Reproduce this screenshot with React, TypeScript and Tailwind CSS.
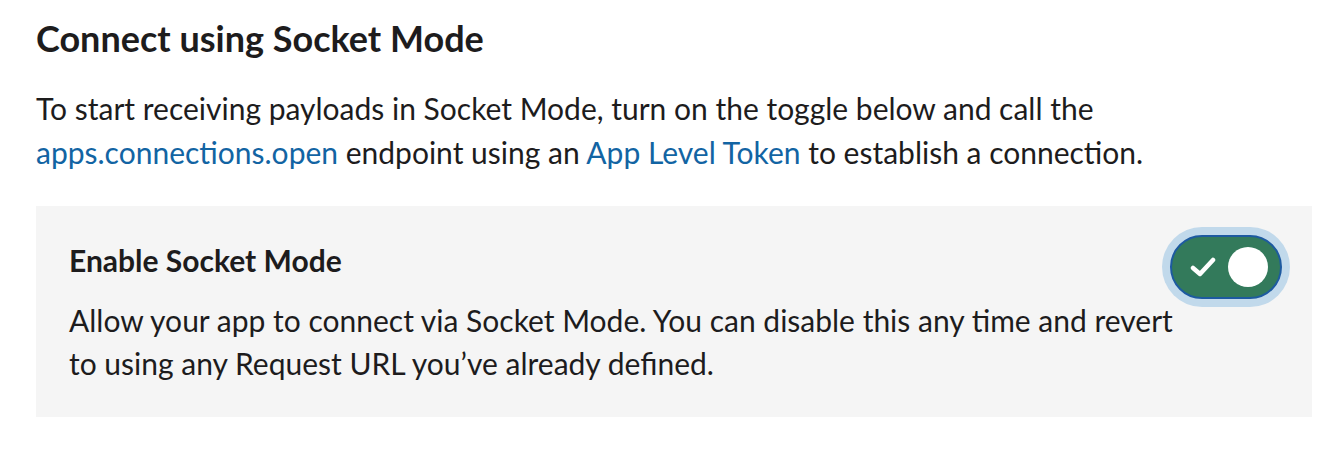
import React from "react";

const Toggle: React.FC = () => {
  return (
    <div className="rounded-full bg-[#c1d9eb] p-[8px]">
      <div className="flex h-[64px] w-[112px] items-center justify-between rounded-full border-2 border-[#1d5aa0] bg-[#337a5b] pl-[18px] pr-[12px]">
        <svg width="26" height="22" viewBox="0 0 26 22" fill="none">
          <path d="M3 12 L10 18 L23 4" stroke="#ffffff" strokeWidth="4.5" strokeLinecap="round" strokeLinejoin="round" />
        </svg>
        <div className="h-[40px] w-[40px] rounded-full bg-white" />
      </div>
    </div>
  );
};

export default function App() {
  return (
    <div className="min-h-[454px] bg-white px-[36px] pt-[16px] text-[#1d1c1d] font-['Lato','Liberation_Sans',sans-serif]">
      <h2 className="text-[36px] font-bold leading-[44px]">Connect using Socket Mode</h2>
      <p className="mt-[26px] text-[30px] leading-[44px]">
        To start receiving payloads in Socket Mode, turn on the toggle below and call the{" "}
        <a className="text-[#1264a3]">apps.connections.open</a> endpoint using an{" "}
        <a className="text-[#1264a3]">App Level Token</a> to establish a connection.
      </p>
      <div className="relative mt-[32px] w-[1276px] bg-[#f5f5f5] pb-[32px] pl-[33px] pr-[22px] pt-[34px]">
        <div className="max-w-[1128px]">
          <h3 className="text-[30px] font-bold leading-[40px]">Enable Socket Mode</h3>
          <p className="mt-[19px] text-[30px] leading-[43px]">
            Allow your app to connect via Socket Mode. You can disable this any time and revert to using any Request URL you’ve already defined.
          </p>
        </div>
        <div className="absolute right-[22px] top-[21px]">
          <Toggle />
        </div>
      </div>
    </div>
  );
}
